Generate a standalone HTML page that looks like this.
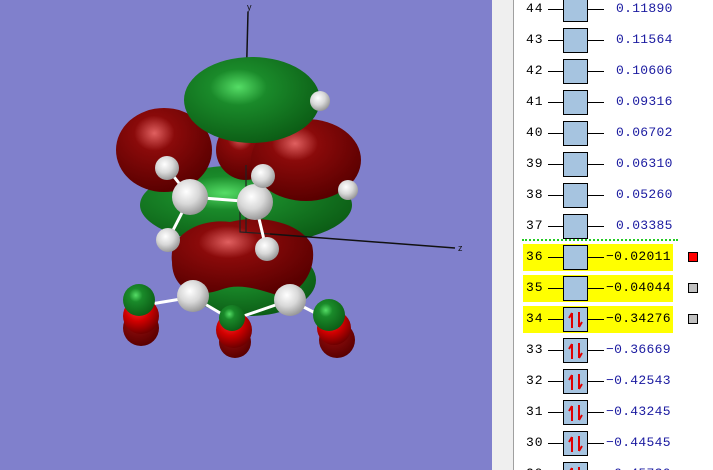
<!DOCTYPE html>
<html><head><meta charset="utf-8"><style>
html,body{margin:0;padding:0;width:713px;height:470px;overflow:hidden;background:#fff;font-family:"Liberation Sans",sans-serif}
#wrap{position:relative;width:713px;height:470px;overflow:hidden}
#view{position:absolute;left:0;top:0;width:492px;height:470px;background:#8080cc}
#strip{position:absolute;left:492px;top:0;width:21px;height:470px;background:#efefef;border-right:1px solid #a0a0a0}
.row{position:absolute;left:514px;width:199px;height:27px}
.hl{position:absolute;left:9px;top:0;width:150px;height:27px;background:#ffff00}
.num{position:absolute;left:12px;top:5px;font:13px "Liberation Mono",monospace;color:#000;letter-spacing:1px}
.ln{position:absolute;top:13px;height:1px;background:#000}
.box{position:absolute;left:49px;top:1px;width:23px;height:23px;border:1px solid #000;background:#a6c4e0}
.val{position:absolute;left:102px;top:5px;font:13px "Liberation Mono",monospace;color:#1a1aa0;letter-spacing:0.3px;white-space:pre}
.neg{left:92px}
.blk{color:#000}
.sq{position:absolute;left:174px;top:8px;width:8px;height:8px;border:1px solid #000;background:#c0c0c0}
</style></head><body><div id="wrap">
<div id="view">
<svg width="492" height="470" viewBox="0 0 492 470">
<defs>
<radialGradient id="g" cx="0.4" cy="0.35" r="0.7"><stop offset="0" stop-color="#55dd66"/><stop offset="0.3" stop-color="#1a8a2a"/><stop offset="1" stop-color="#0b5a14"/></radialGradient>
<radialGradient id="r" cx="0.4" cy="0.3" r="0.7"><stop offset="0" stop-color="#e06060"/><stop offset="0.3" stop-color="#8a0a0a"/><stop offset="1" stop-color="#5a0000"/></radialGradient>
<radialGradient id="rr" cx="0.4" cy="0.3" r="0.7"><stop offset="0" stop-color="#ff3030"/><stop offset="0.5" stop-color="#d00000"/><stop offset="1" stop-color="#700000"/></radialGradient>
<radialGradient id="w" cx="0.4" cy="0.35" r="0.7"><stop offset="0" stop-color="#ffffff"/><stop offset="0.5" stop-color="#d8d8d8"/><stop offset="1" stop-color="#909090"/></radialGradient>
</defs>
<line x1="248" y1="12" x2="244" y2="170" stroke="#111" stroke-width="1.5"/>
<text x="247" y="10" font-size="9" fill="#111" font-family="Liberation Sans">y</text>
<ellipse cx="250" cy="280" rx="66" ry="36" fill="url(#g)"/>
<ellipse cx="246" cy="205" rx="106" ry="40" fill="url(#g)"/>
<ellipse cx="246" cy="150" rx="30" ry="30" fill="url(#r)"/>
<ellipse cx="164" cy="150" rx="48" ry="42" fill="url(#r)"/>
<ellipse cx="306" cy="160" rx="55" ry="41" fill="url(#r)"/>
<ellipse cx="252" cy="100" rx="68" ry="43" fill="url(#g)"/>
<circle cx="320" cy="101" r="10" fill="url(#w)"/>
<circle cx="348" cy="190" r="10" fill="url(#w)"/>
<path d="M172,262 C168,235 200,218 230,222 C260,214 300,222 312,245 C318,270 300,295 280,296 C260,290 240,282 220,290 C190,300 172,285 172,262Z" fill="url(#r)"/>
<line x1="246" y1="165" x2="246" y2="232" stroke="#222" stroke-width="1.2"/>
<polyline points="240,210 240,232 270,234" fill="none" stroke="#222" stroke-width="1.2"/>
<line x1="270" y1="234" x2="455" y2="248" stroke="#111" stroke-width="1.5"/>
<text x="458" y="251" font-size="9" fill="#111" font-family="Liberation Sans">z</text>
<g stroke="#fff" stroke-width="3">
<line x1="190" y1="197" x2="255" y2="202"/><line x1="190" y1="197" x2="167" y2="168"/><line x1="190" y1="197" x2="168" y2="240"/>
<line x1="255" y1="202" x2="263" y2="175"/><line x1="255" y1="202" x2="266" y2="248"/>
<line x1="193" y1="297" x2="232" y2="320"/><line x1="232" y1="320" x2="290" y2="300"/>
<line x1="193" y1="297" x2="145" y2="305"/><line x1="290" y1="300" x2="325" y2="318"/>
</g>
<circle cx="190" cy="197" r="18" fill="url(#w)"/>
<circle cx="255" cy="202" r="18" fill="url(#w)"/>
<circle cx="167" cy="168" r="12" fill="url(#w)"/>
<circle cx="263" cy="176" r="12" fill="url(#w)"/>
<circle cx="168" cy="240" r="12" fill="url(#w)"/>
<circle cx="267" cy="249" r="12" fill="url(#w)"/>
<circle cx="193" cy="296" r="16" fill="url(#w)"/>
<circle cx="290" cy="300" r="16" fill="url(#w)"/>
<circle cx="141" cy="328" r="18" fill="url(#r)"/>
<circle cx="141" cy="316" r="18" fill="url(#rr)"/>
<circle cx="139" cy="300" r="16" fill="url(#g)"/>
<circle cx="235" cy="342" r="16" fill="url(#r)"/>
<circle cx="234" cy="330" r="18" fill="url(#rr)"/>
<circle cx="232" cy="318" r="13" fill="url(#g)"/>
<circle cx="337" cy="340" r="18" fill="url(#r)"/>
<circle cx="334" cy="328" r="17" fill="url(#rr)"/>
<circle cx="329" cy="315" r="16" fill="url(#g)"/>
</svg>
</div>
<div id="strip"></div>
<div style="position:absolute;left:522px;top:239px;width:156px;border-top:2px dotted #22cc22"></div>

<div class="row" style="top:-4px"><div class="num">44</div><div class="ln" style="left:34px;width:15px"></div><div class="box"></div><div class="ln" style="left:74px;width:16px"></div><div class="val">0.11890</div></div>
<div class="row" style="top:27px"><div class="num">43</div><div class="ln" style="left:34px;width:15px"></div><div class="box"></div><div class="ln" style="left:74px;width:16px"></div><div class="val">0.11564</div></div>
<div class="row" style="top:58px"><div class="num">42</div><div class="ln" style="left:34px;width:15px"></div><div class="box"></div><div class="ln" style="left:74px;width:16px"></div><div class="val">0.10606</div></div>
<div class="row" style="top:89px"><div class="num">41</div><div class="ln" style="left:34px;width:15px"></div><div class="box"></div><div class="ln" style="left:74px;width:16px"></div><div class="val">0.09316</div></div>
<div class="row" style="top:120px"><div class="num">40</div><div class="ln" style="left:34px;width:15px"></div><div class="box"></div><div class="ln" style="left:74px;width:16px"></div><div class="val">0.06702</div></div>
<div class="row" style="top:151px"><div class="num">39</div><div class="ln" style="left:34px;width:15px"></div><div class="box"></div><div class="ln" style="left:74px;width:16px"></div><div class="val">0.06310</div></div>
<div class="row" style="top:182px"><div class="num">38</div><div class="ln" style="left:34px;width:15px"></div><div class="box"></div><div class="ln" style="left:74px;width:16px"></div><div class="val">0.05260</div></div>
<div class="row" style="top:213px"><div class="num">37</div><div class="ln" style="left:34px;width:15px"></div><div class="box"></div><div class="ln" style="left:74px;width:16px"></div><div class="val">0.03385</div></div>
<div class="row" style="top:244px"><div class="hl"></div><div class="num">36</div><div class="ln" style="left:34px;width:15px"></div><div class="box"></div><div class="ln" style="left:74px;width:16px"></div><div class="val neg blk">−0.02011</div><div class="sq" style="background:#ff0000"></div></div>
<div class="row" style="top:275px"><div class="hl"></div><div class="num">35</div><div class="ln" style="left:34px;width:15px"></div><div class="box"></div><div class="ln" style="left:74px;width:16px"></div><div class="val neg blk">−0.04044</div><div class="sq"></div></div>
<div class="row" style="top:306px"><div class="hl"></div><div class="num">34</div><div class="ln" style="left:34px;width:15px"></div><div class="box"><svg width="23" height="23"><path d="M8 20V5M8 5L5 10M15 4V19M15 19L18 14" stroke="#e00000" stroke-width="2" fill="none"/></svg></div><div class="ln" style="left:74px;width:16px"></div><div class="val neg blk">−0.34276</div><div class="sq"></div></div>
<div class="row" style="top:337px"><div class="num">33</div><div class="ln" style="left:34px;width:15px"></div><div class="box"><svg width="23" height="23"><path d="M8 20V5M8 5L5 10M15 4V19M15 19L18 14" stroke="#e00000" stroke-width="2" fill="none"/></svg></div><div class="ln" style="left:74px;width:16px"></div><div class="val neg">−0.36669</div></div>
<div class="row" style="top:368px"><div class="num">32</div><div class="ln" style="left:34px;width:15px"></div><div class="box"><svg width="23" height="23"><path d="M8 20V5M8 5L5 10M15 4V19M15 19L18 14" stroke="#e00000" stroke-width="2" fill="none"/></svg></div><div class="ln" style="left:74px;width:16px"></div><div class="val neg">−0.42543</div></div>
<div class="row" style="top:399px"><div class="num">31</div><div class="ln" style="left:34px;width:15px"></div><div class="box"><svg width="23" height="23"><path d="M8 20V5M8 5L5 10M15 4V19M15 19L18 14" stroke="#e00000" stroke-width="2" fill="none"/></svg></div><div class="ln" style="left:74px;width:16px"></div><div class="val neg">−0.43245</div></div>
<div class="row" style="top:430px"><div class="num">30</div><div class="ln" style="left:34px;width:15px"></div><div class="box"><svg width="23" height="23"><path d="M8 20V5M8 5L5 10M15 4V19M15 19L18 14" stroke="#e00000" stroke-width="2" fill="none"/></svg></div><div class="ln" style="left:74px;width:16px"></div><div class="val neg">−0.44545</div></div>
<div class="row" style="top:461px"><div class="num">29</div><div class="ln" style="left:34px;width:15px"></div><div class="box"><svg width="23" height="23"><path d="M8 20V5M8 5L5 10M15 4V19M15 19L18 14" stroke="#e00000" stroke-width="2" fill="none"/></svg></div><div class="ln" style="left:74px;width:16px"></div><div class="val neg">−0.45730</div></div>
</div></body></html>
